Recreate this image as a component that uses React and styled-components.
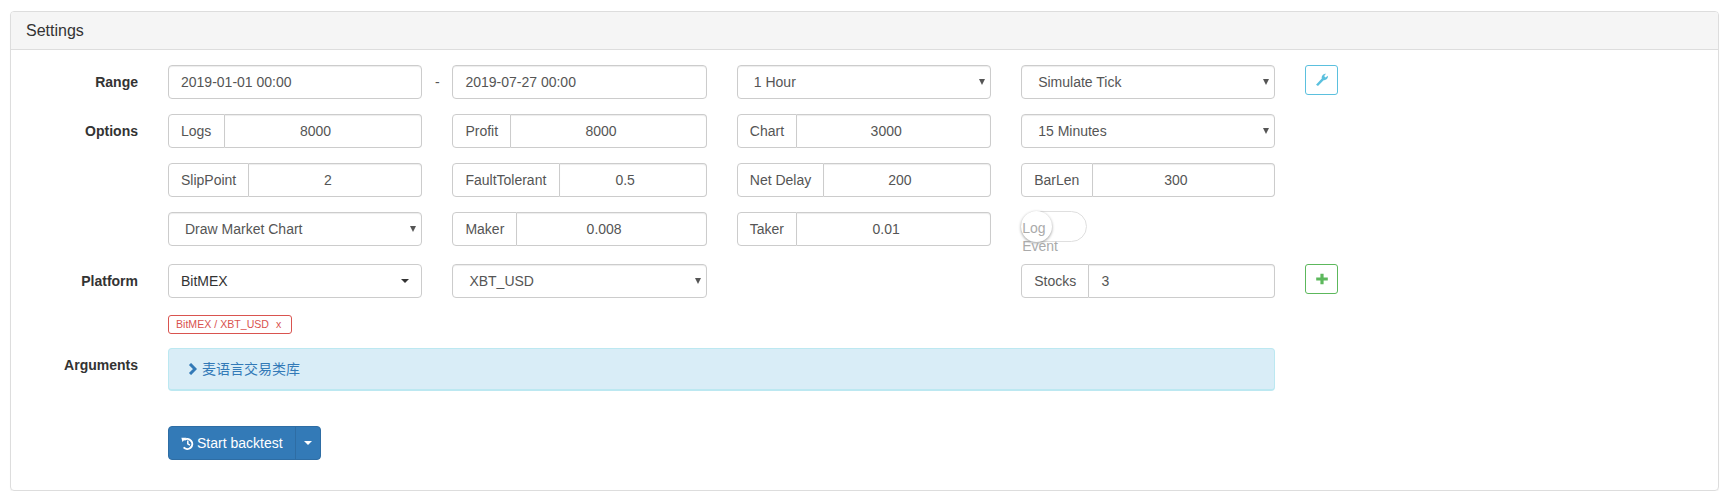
import React from "react";
import styled, { createGlobalStyle } from "styled-components";

const GlobalStyle = createGlobalStyle`
  html, body {
    margin: 0;
    background: #fff;
    color: #333;
    font-family: "Liberation Sans", Arial, "Noto Sans CJK SC", sans-serif;
    font-size: 14px;
    line-height: 20px;
  }
  * {
    box-sizing: border-box;
  }
`;

const Panel = styled.section`
  width: 1709px;
  height: 480px;
  margin: 11px 0 0 10px;
  border: 1px solid #ddd;
  border-radius: 4px;
  box-shadow: 0 1px 1px rgba(0, 0, 0, 0.05);
`;

const PanelHeading = styled.div`
  height: 38px;
  padding: 10px 15px;
  background: #f5f5f5;
  border-bottom: 1px solid #ddd;
  border-radius: 3px 3px 0 0;
  font-size: 16px;
  line-height: 18px;
`;

const PanelBody = styled.div`
  padding-top: 15px;
`;

const FormRow = styled.div`
  display: grid;
  grid-template-columns: 127px repeat(3, 254.4px) 254px 33px;
  column-gap: 30px;
  align-items: start;
  margin-bottom: ${p => p.$after}px;
`;

const Label = styled.label`
  padding-top: 7px;
  font-weight: bold;
  text-align: right;
`;

const WideCell = styled.div`
  display: flex;
  grid-column: 2 / span 4;
`;

const RangeCell = styled.div`
  grid-column: span 2;
  display: flex;
  align-items: center;
`;

const Dash = styled.span`
  flex: 0 0 30px;
  text-align: center;
  color: #555;
`;

const TextInput = styled.input`
  display: block;
  width: 100%;
  min-width: 0;
  height: 34px;
  padding: 6px 12px;
  padding-right: ${p => (p.$center ? 27 : 12)}px;
  border: 1px solid #ccc;
  border-radius: ${p => (p.$joined ? "0 4px 4px 0" : "4px")};
  border-left-width: ${p => (p.$joined ? 0 : 1)}px;
  background: #fff;
  box-shadow: inset 0 1px 1px rgba(0, 0, 0, 0.075);
  color: #555;
  font: inherit;
  text-align: ${p => (p.$center ? "center" : "left")};
  outline: none;
`;

const InputGroup = styled.div`
  display: flex;
`;

const Addon = styled.span`
  flex: none;
  height: 34px;
  padding: 6px 12.2px 6px 12px;
  border: 1px solid #ccc;
  border-radius: 4px 0 0 4px;
  background: #fff;
  color: #555;
  white-space: nowrap;
`;

const SelectWrap = styled.div`
  position: relative;

  &::after {
    content: "";
    position: absolute;
    top: 14px;
    right: 6px;
    border-style: solid;
    border-width: 6px 3.5px 0;
    border-color: #555 transparent transparent;
    pointer-events: none;
  }
`;

const Select = styled.select`
  display: block;
  width: 100%;
  height: 34px;
  padding: 6px 12px 6px 16px;
  border: 1px solid #ccc;
  border-radius: 4px;
  background: #fff;
  box-shadow: inset 0 1px 1px rgba(0, 0, 0, 0.075);
  color: #555;
  font: inherit;
  appearance: none;
  outline: none;
`;

const DropdownButton = styled.button`
  display: flex;
  align-items: center;
  justify-content: space-between;
  width: 100%;
  height: 34px;
  padding: 6px 12px;
  border: 1px solid #ccc;
  border-radius: 4px;
  background: #fff;
  color: #333;
  font: inherit;
`;

const Caret = styled.span`
  display: inline-block;
  border-style: solid;
  border-width: 4px 4px 0;
  border-color: ${p => p.$color} transparent transparent;
`;

const IconButton = styled.button`
  display: flex;
  align-items: center;
  justify-content: center;
  width: 33px;
  height: 30px;
  padding: 0;
  border: 1px solid ${p => p.$color};
  border-radius: 3px;
  background: #fff;
  color: ${p => p.$color};
`;

const Toggle = styled.div`
  position: relative;
  width: 66px;
  height: 31px;
  margin-top: -1px;
  border: 1px solid #dfdfdf;
  border-radius: 16px;
  background: #fff;
`;

const Knob = styled.span`
  position: absolute;
  top: -1px;
  left: -1px;
  width: 31px;
  height: 31px;
  border-radius: 50%;
  background: #fff;
  box-shadow: 0 1px 3px rgba(0, 0, 0, 0.4);
`;

const ToggleText = styled.span`
  position: absolute;
  top: 7px;
  left: 0;
  width: 40px;
  color: #aaa;
  line-height: 18px;
`;

const Tag = styled.span`
  display: inline-flex;
  align-items: center;
  height: 19px;
  padding: 0 10px 0 7px;
  border: 1px solid #d9534f;
  border-radius: 3px;
  color: #d9534f;
  font-size: 10.6px;
  line-height: 17px;
`;

const TagClose = styled.span`
  margin-left: 7px;
`;

const Alert = styled.div`
  display: flex;
  flex: 1;
  align-items: center;
  gap: 5px;
  height: 43px;
  padding: 0 19px;
  border: 1px solid #bce8f1;
  border-bottom-width: 2px;
  border-radius: 4px;
  background: #d9edf7;
  color: #337ab7;
`;

const SplitButton = styled.div`
  display: inline-flex;
  height: 34px;
  border: 1px solid #2e6da4;
  border-radius: 4px;
  background: #337ab7;
  color: #fff;
`;

const StartPart = styled.span`
  display: flex;
  align-items: center;
  gap: 3px;
  width: 126px;
  padding-left: 12px;
`;

const ArrowPart = styled.span`
  display: flex;
  align-items: center;
  justify-content: center;
  width: 25px;
  border-left: 1px solid #2e6da4;
`;

const WrenchIcon = () => (
  <svg width="14" height="14" viewBox="0 0 14 14" fill="currentColor">
    <path d="M1 11.8 L6.8 5.6 C6.3 3 8 .8 11 .8 L9.2 3 L10.3 4.5 L13 2.8 C13.2 5.5 11 7.6 8.6 7.2 L3 13 Z" />
  </svg>
);

const PlusIcon = () => (
  <svg width="12" height="12" viewBox="0 0 12 12" fill="currentColor">
    <path d="M4.4 0.8 H7.6 V4.4 H11.8 V7.6 H7.6 V11.2 H4.4 V7.6 H0.2 V4.4 H4.4 Z" />
  </svg>
);

const ChevronIcon = () => (
  <svg width="9" height="12" viewBox="0 0 9 12" fill="none" stroke="currentColor" strokeWidth="3">
    <path d="M2 1 L7 6 L2 11" />
  </svg>
);

const HistoryIcon = () => (
  <svg width="13" height="13" viewBox="0 0 13 13" fill="none" stroke="currentColor">
    <path d="M3.2 3 A5 5 0 1 1 2.6 10.4" strokeWidth="2" />
    <path d="M0.4 0.8 H5.4 L1.4 5 Z" fill="currentColor" stroke="none" />
    <path d="M6.8 3.6 V6.9 L9 8.2" strokeWidth="1.5" />
  </svg>
);

const AddonInput = ({ label, value, center = true }) => (
  <InputGroup>
    <Addon>{label}</Addon>
    <TextInput $joined $center={center} readOnly defaultValue={value} />
  </InputGroup>
);

const Dropdown = ({ value }) => (
  <SelectWrap>
    <Select defaultValue={value}>
      <option>{value}</option>
    </Select>
  </SelectWrap>
);

export default function App() {
  return (
    <>
      <GlobalStyle />
      <Panel>
        <PanelHeading>Settings</PanelHeading>
        <PanelBody>
          <FormRow $after={15}>
            <Label>Range</Label>
            <RangeCell>
              <TextInput readOnly defaultValue="2019-01-01 00:00" />
              <Dash>-</Dash>
              <TextInput readOnly defaultValue="2019-07-27 00:00" />
            </RangeCell>
            <Dropdown value="1 Hour" />
            <Dropdown value="Simulate Tick" />
            <IconButton $color="#5bc0de">
              <WrenchIcon />
            </IconButton>
          </FormRow>

          <FormRow $after={15}>
            <Label>Options</Label>
            <AddonInput label="Logs" value="8000" />
            <AddonInput label="Profit" value="8000" />
            <AddonInput label="Chart" value="3000" />
            <Dropdown value="15 Minutes" />
          </FormRow>

          <FormRow $after={15}>
            <span />
            <AddonInput label="SlipPoint" value="2" />
            <AddonInput label="FaultTolerant" value="0.5" />
            <AddonInput label="Net Delay" value="200" />
            <AddonInput label="BarLen" value="300" />
          </FormRow>

          <FormRow $after={18}>
            <span />
            <Dropdown value="Draw Market Chart" />
            <AddonInput label="Maker" value="0.008" />
            <AddonInput label="Taker" value="0.01" />
            <Toggle>
              <Knob />
              <ToggleText>Log Event</ToggleText>
            </Toggle>
          </FormRow>

          <FormRow $after={17}>
            <Label>Platform</Label>
            <DropdownButton>
              BitMEX
              <Caret $color="#333" />
            </DropdownButton>
            <Dropdown value="XBT_USD" />
            <span />
            <AddonInput label="Stocks" value="3" center={false} />
            <IconButton $color="#5cb85c">
              <PlusIcon />
            </IconButton>
          </FormRow>

          <FormRow $after={14}>
            <span />
            <WideCell>
              <Tag>
                BitMEX / XBT_USD
                <TagClose>x</TagClose>
              </Tag>
            </WideCell>
          </FormRow>

          <FormRow $after={35}>
            <Label>Arguments</Label>
            <WideCell>
              <Alert>
                <ChevronIcon />
                麦语言交易类库
              </Alert>
            </WideCell>
          </FormRow>

          <FormRow $after={0}>
            <span />
            <WideCell>
              <SplitButton>
                <StartPart>
                  <HistoryIcon />
                  Start backtest
                </StartPart>
                <ArrowPart>
                  <Caret $color="#fff" />
                </ArrowPart>
              </SplitButton>
            </WideCell>
          </FormRow>
        </PanelBody>
      </Panel>
    </>
  );
}
